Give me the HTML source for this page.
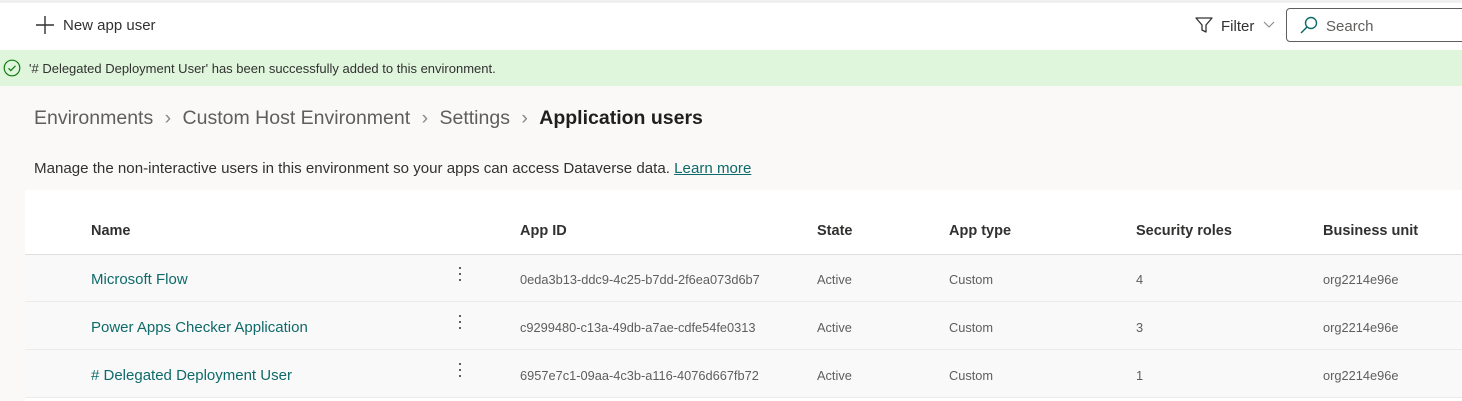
<!DOCTYPE html>
<html><head><meta charset="utf-8"><style>
*{margin:0;padding:0;box-sizing:border-box}
body{width:1462px;height:401px;overflow:hidden;background:#faf9f8;font-family:"Liberation Sans",sans-serif;color:#323130;position:relative}
.a{position:absolute;white-space:nowrap}
.top{left:0;top:0;width:1462px;height:3px;background:#f0f0f0}
.tb{left:0;top:3px;width:1462px;height:47px;background:#fff}
.msg{left:0;top:50px;width:1462px;height:36px;background:#dff6dd}
.tbl{left:25px;top:190px;width:1437px;height:211px;background:#fff}
.row{left:25px;width:1437px;height:48px;background:#f9f9f9;border-bottom:1px solid #edebe9}
.h{font-size:14.5px;font-weight:bold;color:#323130;top:223px}
.c{font-size:12.8px;color:#605e5c}
.n{font-size:15px;color:#0f6a6a;left:91px}
.dots{left:459px;width:3px}
.dots i{display:block;width:2px;height:2px;background:#323130;margin-bottom:4px;border-radius:1px}
</style></head><body>
<div class="a top"></div>
<div class="a tb"></div>
<svg class="a" style="left:35px;top:15px" width="20" height="20" viewBox="0 0 20 20"><path d="M10 1v18M1 10h18" stroke="#323130" stroke-width="1.4"/></svg>
<div class="a" style="left:63px;top:17px;font-size:15px">New app user</div>
<svg class="a" style="left:1194px;top:15px" width="20" height="20" viewBox="0 0 20 20"><path d="M2 3h16l-6 7v7l-4-2v-5z" fill="none" stroke="#323130" stroke-width="1.3" stroke-linejoin="round"/></svg>
<div class="a" style="left:1221px;top:18px;font-size:15px">Filter</div>
<svg class="a" style="left:1263px;top:21px" width="12" height="8" viewBox="0 0 12 8"><path d="M1 1l5 5 5-5" fill="none" stroke="#8a8886" stroke-width="1.1"/></svg>
<div class="a" style="left:1286px;top:8px;width:190px;height:34px;border:1px solid #605e5c;border-radius:4px;background:#fff"></div>
<svg class="a" style="left:1299px;top:15px" width="20" height="20" viewBox="0 0 20 20"><circle cx="12" cy="8" r="5.5" fill="none" stroke="#0f6a6a" stroke-width="1.4"/><path d="M8 12l-6 6" stroke="#0f6a6a" stroke-width="1.5"/></svg>
<div class="a" style="left:1326px;top:18px;font-size:15px;color:#605e5c">Search</div>
<div class="a msg"></div>
<svg class="a" style="left:3px;top:59px" width="18" height="18" viewBox="0 0 18 18"><circle cx="9" cy="9" r="7.8" fill="none" stroke="#107c10" stroke-width="1.2"/><path d="M5.5 9.3l2.3 2.3 4.7-4.8" fill="none" stroke="#107c10" stroke-width="1.2"/></svg>
<div class="a" style="left:29px;top:61px;font-size:13px">'# Delegated Deployment User' has been successfully added to this environment.</div>
<div class="a" style="left:34px;top:107px;font-size:19.5px;color:#605e5c">Environments <span style="margin:0 6px;color:#8a8886">›</span> Custom Host Environment <span style="margin:0 6px;color:#8a8886">›</span> Settings <span style="margin:0 6px;color:#8a8886">›</span> <b style="color:#201f1e">Application users</b></div>
<div class="a" style="left:34px;top:160px;font-size:15.1px">Manage the non-interactive users in this environment so your apps can access Dataverse data. <span style="color:#0f6a6a;text-decoration:underline">Learn more</span></div>
<div class="a tbl"></div>
<div class="a" style="left:25px;top:254px;width:1437px;height:1px;background:#e1dfdd"></div>
<div class="a row" style="top:255px;height:47px"></div>
<div class="a row" style="top:302px"></div>
<div class="a row" style="top:350px"></div>
<div class="a h" style="left:91px">Name</div>
<div class="a h" style="left:520px">App ID</div>
<div class="a h" style="left:817px">State</div>
<div class="a h" style="left:949px">App type</div>
<div class="a h" style="left:1136px">Security roles</div>
<div class="a h" style="left:1323px">Business unit</div>

<div class="a n" style="top:271px">Microsoft Flow</div>
<div class="a dots" style="top:267px"><i></i><i></i><i></i></div>
<div class="a c" style="left:520px;top:272px">0eda3b13-ddc9-4c25-b7dd-2f6ea073d6b7</div>
<div class="a c" style="left:817px;top:272px">Active</div>
<div class="a c" style="left:949px;top:272px">Custom</div>
<div class="a c" style="left:1136px;top:272px">4</div>
<div class="a c" style="left:1323px;top:272px">org2214e96e</div>

<div class="a n" style="top:319px">Power Apps Checker Application</div>
<div class="a dots" style="top:315px"><i></i><i></i><i></i></div>
<div class="a c" style="left:520px;top:320px">c9299480-c13a-49db-a7ae-cdfe54fe0313</div>
<div class="a c" style="left:817px;top:320px">Active</div>
<div class="a c" style="left:949px;top:320px">Custom</div>
<div class="a c" style="left:1136px;top:320px">3</div>
<div class="a c" style="left:1323px;top:320px">org2214e96e</div>

<div class="a n" style="top:367px"># Delegated Deployment User</div>
<div class="a dots" style="top:363px"><i></i><i></i><i></i></div>
<div class="a c" style="left:520px;top:368px">6957e7c1-09aa-4c3b-a116-4076d667fb72</div>
<div class="a c" style="left:817px;top:368px">Active</div>
<div class="a c" style="left:949px;top:368px">Custom</div>
<div class="a c" style="left:1136px;top:368px">1</div>
<div class="a c" style="left:1323px;top:368px">org2214e96e</div>
</body></html>
